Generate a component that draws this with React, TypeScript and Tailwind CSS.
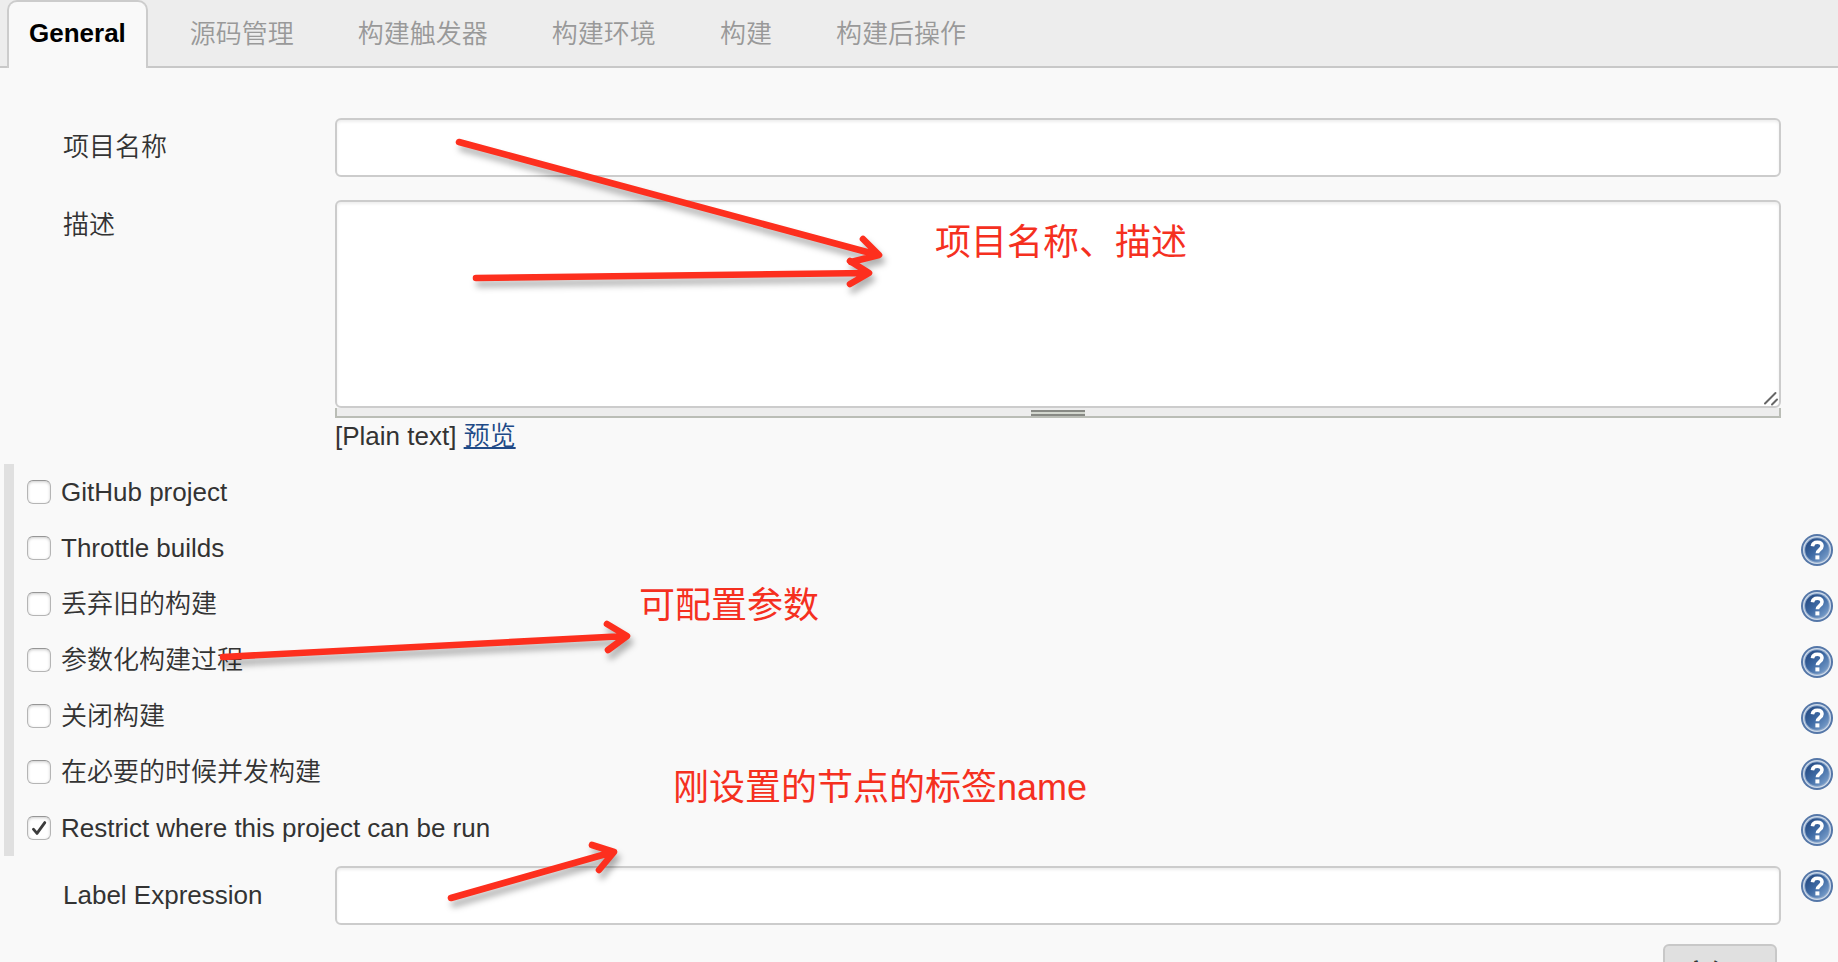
import { useState } from "react";

interface IOption {
  id: string;
  label: string;
  help: boolean;
}

const tabs = ["General", "源码管理", "构建触发器", "构建环境", "构建", "构建后操作"];

const options: IOption[] = [
  { id: "github", label: "GitHub project", help: false },
  { id: "throttle", label: "Throttle builds", help: true },
  { id: "discard", label: "丢弃旧的构建", help: true },
  { id: "params", label: "参数化构建过程", help: true },
  { id: "disable", label: "关闭构建", help: true },
  { id: "concurrent", label: "在必要的时候并发构建", help: true },
  { id: "restrict", label: "Restrict where this project can be run", help: true },
];

const HelpButton = () => {
  return (
    <button type="button" aria-label="帮助" className="mt-3.5 block size-8 shrink-0">
      <svg viewBox="0 0 32 32" className="size-8">
        <defs>
          <linearGradient id="helpFill" x1="0" y1="0" x2="1" y2="1">
            <stop offset="0" stopColor="#1f4279" />
            <stop offset="0.5" stopColor="#3f6ba5" />
            <stop offset="1" stopColor="#86a9d2" />
          </linearGradient>
        </defs>
        <circle cx="16" cy="16" r="16" fill="#5577a8" />
        <circle cx="16" cy="16" r="14" fill="#cfdbea" />
        <circle cx="16" cy="16" r="12.8" fill="#8ba6ca" />
        <circle cx="16" cy="16" r="11.8" fill="url(#helpFill)" />
        <path
          d="M11.4 12.2c.4-2.8 2.2-4 4.9-4 2.9 0 4.7 1.5 4.7 3.9 0 3.6-4.6 3.4-4.6 7.2"
          fill="none"
          stroke="#fff"
          strokeWidth="3.6"
        />
        <rect x="14.4" y="21.4" width="4" height="4" fill="#fff" />
      </svg>
    </button>
  );
};

const Checkbox = ({ option }: { option: IOption }) => {
  const [checked, setChecked] = useState(option.id === "restrict");

  return (
    <div className="flex h-14 justify-between pr-[5px]">
      <div className="flex items-center pl-[13px]">
        <span className="grid size-6">
          <input
            id={option.id}
            type="checkbox"
            checked={checked}
            onChange={() => setChecked(!checked)}
            className="col-start-1 row-start-1 size-6 appearance-none rounded-md border border-[#b5b5b5] border-t-[#969696] bg-white shadow-[inset_0_1px_3px_#ccc]"
          />
          {checked && (
            <svg viewBox="0 0 24 24" className="pointer-events-none col-start-1 row-start-1 size-6">
              <path
                d="M6.4 13.2 10 17.4 17.8 6.6"
                fill="none"
                stroke="#3c3c3c"
                strokeWidth="2.8"
                strokeLinecap="round"
                strokeLinejoin="round"
              />
            </svg>
          )}
        </span>
        <label htmlFor={option.id} className="pl-2.5 leading-8">
          {option.label}
        </label>
      </div>
      {option.help && <HelpButton />}
    </div>
  );
};

// red arrows and notes drawn over the form
const Annotations = () => {
  return (
    <div className="pointer-events-none absolute inset-0 text-4xl font-normal text-[#f5301f]">
      <svg
        viewBox="0 0 1000 962"
        className="h-[962px] w-[1000px] drop-shadow-[3px_6px_3px_rgba(0,0,0,0.3)]"
        fill="none"
        stroke="#fd2f1e"
        strokeWidth="6.6"
        strokeLinecap="round"
        strokeLinejoin="round"
      >
        <path d="M459 142 878 255M863 239l16 16-28 7" />
        <path d="M476 278 868 273M850 261l19 12-19 11" />
        <path d="M223 657 626 636M607 624l20 12-19 14" />
        <path d="M451 898 613 852M592 845l22 7-15 18" />
      </svg>
      <p className="absolute top-[223px] left-[935px]">项目名称、描述</p>
      <p className="absolute top-[586px] left-[639px]">可配置参数</p>
      <p className="absolute top-[768px] left-[673px]">刚设置的节点的标签name</p>
    </div>
  );
};

const App = () => {
  const [active, setActive] = useState("General");

  return (
    <div className="relative h-screen overflow-hidden bg-[#f9f9f9] font-['Liberation_Sans','Noto_Sans_CJK_SC',sans-serif] text-[26px] font-[350] text-[#333]">
      {/* Tabs */}
      <nav className="flex h-[68px] gap-5 bg-[#ededed] pl-[7px] shadow-[inset_0_-2px_0_#c8c8c8]">
        {tabs.map((tab) => (
          <button
            key={tab}
            type="button"
            onClick={() => setActive(tab)}
            className={
              tab === active
                ? "rounded-t-[10px] border-2 border-b-0 border-[#ccc] bg-[#f9f9f9] px-5 pb-1 font-bold text-black"
                : "border-2 border-transparent px-5 text-[#999]"
            }
          >
            {tab}
          </button>
        ))}
      </nav>

      <form className="pt-[50px]">
        {/* Name */}
        <div className="flex items-center pr-[57px] pl-[63px]">
          <label htmlFor="name" className="w-[272px]">
            项目名称
          </label>
          <input
            id="name"
            type="text"
            className="h-[59px] flex-1 rounded-md border-2 border-[#ccc] bg-white px-3 shadow-[inset_0_2px_3px_#eee]"
          />
        </div>

        {/* Description */}
        <div className="mt-[23px] flex items-start pr-[57px] pl-[63px]">
          <label htmlFor="description" className="w-[272px] pt-1.5">
            描述
          </label>
          <div className="flex-1">
            <div className="relative">
              <textarea
                id="description"
                className="block h-52 w-full resize-none rounded-md border-2 border-[#ccc] bg-white px-3 shadow-[inset_0_2px_3px_#eee]"
              />
              <svg viewBox="0 0 16 16" className="absolute right-0.5 bottom-0.5 size-4">
                <path d="M2 13.5 12.5 3M9 14.5 14 9.5" stroke="#666" strokeWidth="2" fill="none" strokeLinecap="round" />
              </svg>
            </div>
            <div className="flex h-2.5 items-end justify-center border-2 border-t-0 border-[#babdb6] bg-[#ededed]">
              <div className="h-1.5 w-[54px] border-y-2 border-[#888a85] bg-[#d3d7cf]"></div>
            </div>
            <p className="leading-9">
              [Plain text]{" "}
              <a href="#preview" className="text-[#204a87] underline decoration-2 underline-offset-2">
                预览
              </a>
            </p>
          </div>
        </div>

        {/* Options */}
        <div className="mt-2.5 ml-1 border-l-[10px] border-[#e0e0e0]">
          {options.map((option) => (
            <Checkbox key={option.id} option={option} />
          ))}
        </div>

        {/* Label expression */}
        <div className="flex items-start pr-[5px] pl-[63px]">
          <div className="mt-2.5 flex flex-1 items-center">
            <label htmlFor="expression" className="w-[272px]">
              Label Expression
            </label>
            <input
              id="expression"
              type="text"
              className="mr-5 h-[59px] flex-1 rounded-md border-2 border-[#ccc] bg-white px-3 shadow-[inset_0_2px_3px_#eee]"
            />
          </div>
          <HelpButton />
        </div>

        <div className="mt-[19px] flex justify-end pr-[61px]">
          <button
            type="button"
            className="h-[60px] rounded-md border-2 border-[#c8c8c8] bg-[#e0e0e0] px-[18px] font-bold text-[#333]"
          >
            高级...
          </button>
        </div>
      </form>

      <Annotations />
    </div>
  );
};

export default App;
